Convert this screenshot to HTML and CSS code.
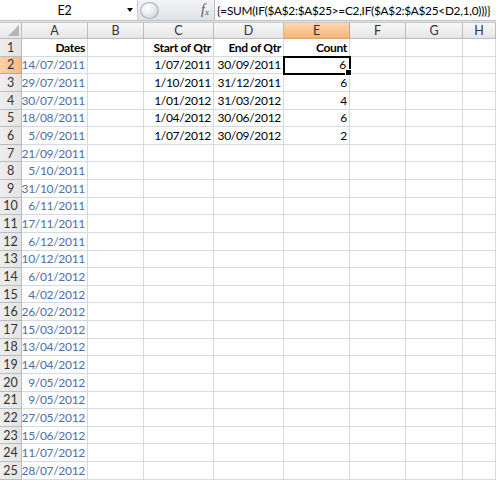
FILE: index.html
```html
<!DOCTYPE html>
<html>
<head>
<meta charset="utf-8">
<link rel="stylesheet" href="styles.css">
</head>
<body>
<div class="app">
  <div class="fbar">
    <div class="namebox"><span class="nb-text">E2</span><span class="nb-arrow"></span></div>
    <div class="fbtns">
      <span class="knob"></span>
      <span class="fx"><i>f</i><sub>x</sub></span>
    </div>
    <div class="formula">{=SUM(IF($A$2:$A$25&gt;=C2,IF($A$2:$A$25&lt;D2,1,0)))}</div>
  </div>
  <div class="sheet">
    <div class="corner"><span class="tri"></span></div>
    <div class="ch">A</div><div class="ch">B</div><div class="ch">C</div><div class="ch">D</div><div class="ch sel">E</div><div class="ch">F</div><div class="ch">G</div><div class="ch">H</div>

    <div class="rh">1</div><div class="c b">Dates</div><div class="c"></div><div class="c b">Start of Qtr</div><div class="c b">End of Qtr</div><div class="c b">Count</div><div class="c"></div><div class="c"></div><div class="c"></div>
    <div class="rh sel">2</div><div class="c d">14/07/2011</div><div class="c"></div><div class="c">1/07/2011</div><div class="c">30/09/2011</div><div class="c active">6<span class="handle"></span></div><div class="c"></div><div class="c"></div><div class="c"></div>
    <div class="rh">3</div><div class="c d">29/07/2011</div><div class="c"></div><div class="c">1/10/2011</div><div class="c">31/12/2011</div><div class="c">6</div><div class="c"></div><div class="c"></div><div class="c"></div>
    <div class="rh">4</div><div class="c d">30/07/2011</div><div class="c"></div><div class="c">1/01/2012</div><div class="c">31/03/2012</div><div class="c">4</div><div class="c"></div><div class="c"></div><div class="c"></div>
    <div class="rh">5</div><div class="c d">18/08/2011</div><div class="c"></div><div class="c">1/04/2012</div><div class="c">30/06/2012</div><div class="c">6</div><div class="c"></div><div class="c"></div><div class="c"></div>
    <div class="rh">6</div><div class="c d">5/09/2011</div><div class="c"></div><div class="c">1/07/2012</div><div class="c">30/09/2012</div><div class="c">2</div><div class="c"></div><div class="c"></div><div class="c"></div>
    <div class="rh">7</div><div class="c d">21/09/2011</div><div class="c"></div><div class="c"></div><div class="c"></div><div class="c"></div><div class="c"></div><div class="c"></div><div class="c"></div>
    <div class="rh">8</div><div class="c d">5/10/2011</div><div class="c"></div><div class="c"></div><div class="c"></div><div class="c"></div><div class="c"></div><div class="c"></div><div class="c"></div>
    <div class="rh">9</div><div class="c d">31/10/2011</div><div class="c"></div><div class="c"></div><div class="c"></div><div class="c"></div><div class="c"></div><div class="c"></div><div class="c"></div>
    <div class="rh">10</div><div class="c d">6/11/2011</div><div class="c"></div><div class="c"></div><div class="c"></div><div class="c"></div><div class="c"></div><div class="c"></div><div class="c"></div>
    <div class="rh">11</div><div class="c d">17/11/2011</div><div class="c"></div><div class="c"></div><div class="c"></div><div class="c"></div><div class="c"></div><div class="c"></div><div class="c"></div>
    <div class="rh">12</div><div class="c d">6/12/2011</div><div class="c"></div><div class="c"></div><div class="c"></div><div class="c"></div><div class="c"></div><div class="c"></div><div class="c"></div>
    <div class="rh">13</div><div class="c d">10/12/2011</div><div class="c"></div><div class="c"></div><div class="c"></div><div class="c"></div><div class="c"></div><div class="c"></div><div class="c"></div>
    <div class="rh">14</div><div class="c d">6/01/2012</div><div class="c"></div><div class="c"></div><div class="c"></div><div class="c"></div><div class="c"></div><div class="c"></div><div class="c"></div>
    <div class="rh">15</div><div class="c d">4/02/2012</div><div class="c"></div><div class="c"></div><div class="c"></div><div class="c"></div><div class="c"></div><div class="c"></div><div class="c"></div>
    <div class="rh">16</div><div class="c d">26/02/2012</div><div class="c"></div><div class="c"></div><div class="c"></div><div class="c"></div><div class="c"></div><div class="c"></div><div class="c"></div>
    <div class="rh">17</div><div class="c d">15/03/2012</div><div class="c"></div><div class="c"></div><div class="c"></div><div class="c"></div><div class="c"></div><div class="c"></div><div class="c"></div>
    <div class="rh">18</div><div class="c d">13/04/2012</div><div class="c"></div><div class="c"></div><div class="c"></div><div class="c"></div><div class="c"></div><div class="c"></div><div class="c"></div>
    <div class="rh">19</div><div class="c d">14/04/2012</div><div class="c"></div><div class="c"></div><div class="c"></div><div class="c"></div><div class="c"></div><div class="c"></div><div class="c"></div>
    <div class="rh">20</div><div class="c d">9/05/2012</div><div class="c"></div><div class="c"></div><div class="c"></div><div class="c"></div><div class="c"></div><div class="c"></div><div class="c"></div>
    <div class="rh">21</div><div class="c d">9/05/2012</div><div class="c"></div><div class="c"></div><div class="c"></div><div class="c"></div><div class="c"></div><div class="c"></div><div class="c"></div>
    <div class="rh">22</div><div class="c d">27/05/2012</div><div class="c"></div><div class="c"></div><div class="c"></div><div class="c"></div><div class="c"></div><div class="c"></div><div class="c"></div>
    <div class="rh">23</div><div class="c d">15/06/2012</div><div class="c"></div><div class="c"></div><div class="c"></div><div class="c"></div><div class="c"></div><div class="c"></div><div class="c"></div>
    <div class="rh">24</div><div class="c d">11/07/2012</div><div class="c"></div><div class="c"></div><div class="c"></div><div class="c"></div><div class="c"></div><div class="c"></div><div class="c"></div>
    <div class="rh">25</div><div class="c d">28/07/2012</div><div class="c"></div><div class="c"></div><div class="c"></div><div class="c"></div><div class="c"></div><div class="c"></div><div class="c"></div>
  </div>
</div>
</body>
</html>
```
FILE: styles.css
```css
html, body {
  margin: 0;
  padding: 0;
  background: #ffffff;
  overflow: hidden;
}
.app {
  width: 496px;
  height: 480px;
  overflow: hidden;
  font-family: "Lato", "Open Sans", sans-serif;
  font-size: 12px;
  letter-spacing: -0.3px;
  color: #000;
  background: #dfe3e8;
}
.fbar {
  display: flex;
  height: 20px;
  border-bottom: 1px solid #c0c4ca;
  background: #e6e9ed;
  margin-bottom: 1px;
}
.namebox {
  width: 137px;
  background: #fff;
  border-right: 1px solid #c7cbd1;
  display: flex;
  align-items: center;
  position: relative;
}
.nb-text {
  flex: 1;
  text-align: center;
  padding-left: 2px;
  font-size: 12.5px;
}
.nb-arrow {
  width: 0;
  height: 0;
  border-left: 3.5px solid transparent;
  border-right: 3.5px solid transparent;
  border-top: 4px solid #000;
  margin-right: 4px;
}
.fbtns {
  width: 76px;
  display: flex;
  align-items: center;
  justify-content: space-between;
  padding: 0 2px 0 2px;
  box-sizing: border-box;
  background: linear-gradient(#f3f4f6, #dfe2e6);
}
.knob {
  width: 19px;
  height: 17px;
  border-radius: 50%;
  background: radial-gradient(circle at 40% 35%, #ffffff 0%, #e9ebee 45%, #bfc3c9 100%);
  border: 1px solid #a9aeb5;
  box-sizing: border-box;
}
.fx {
  font-family: "Liberation Serif", serif;
  color: #555;
  font-size: 14px;
  margin-right: 3px;
  line-height: 1;
  letter-spacing: 0;
}
.fx sub {
  font-size: 9px;
  font-style: italic;
  vertical-align: -1px;
}
.formula {
  flex: 1;
  background: #fff;
  border-left: 1px solid #b5bac1;
  padding-left: 2px;
  display: flex;
  align-items: center;
  white-space: nowrap;
  overflow: hidden;
  font-size: 11.8px;
  letter-spacing: -0.25px;
}
.sheet {
  display: grid;
  grid-template-columns: 22px 66px 56px 70px 70px 66px 56px 57px 1fr;
  grid-template-rows: 17px repeat(25, 17.64px);
  background: #fff;
}
.corner, .ch, .rh {
  background: linear-gradient(#f7f7f7, #e6e6e6);
  border-right: 1px solid #bcbcbc;
  border-bottom: 1px solid #bcbcbc;
  box-sizing: border-box;
  color: #333;
  display: flex;
  align-items: center;
  justify-content: center;
  font-size: 12.5px;
  letter-spacing: 0;
}
.ch {
  border-top: 1px solid #c8c8c8;
}
.corner {
  border-top: 1px solid #c8c8c8;
  position: relative;
}
.tri {
  position: absolute;
  right: 2px;
  bottom: 2px;
  width: 0;
  height: 0;
  border-left: 11px solid transparent;
  border-bottom: 11px solid #b5b5b5;
}
.rh {
  background: linear-gradient(90deg, #eeeeee, #e4e4e4);
}
.ch.sel {
  background: linear-gradient(#fcd8b0, #f6b478);
  border-right-color: #d9a16a;
  border-bottom-color: #d9a16a;
}
.rh.sel {
  background: linear-gradient(90deg, #f9d1a7, #f4bb84);
  border-right-color: #d9a16a;
  border-bottom-color: #d9a16a;
}
.c {
  border-right: 1px solid #d4d9e2;
  border-bottom: 1px solid #d4d9e2;
  box-sizing: border-box;
  text-align: right;
  padding-right: 2px;
  display: flex;
  align-items: center;
  justify-content: flex-end;
  white-space: nowrap;
  overflow: visible;
}
.b {
  font-weight: bold;
}
.d {
  color: #4e6fa6;
}
.active {
  position: relative;
  outline: 2px solid #000;
  outline-offset: -1px;
  padding-right: 3px;
}
.handle {
  position: absolute;
  right: -3px;
  bottom: -3px;
  width: 5px;
  height: 5px;
  background: #000;
  border: 1px solid #fff;
}
```
